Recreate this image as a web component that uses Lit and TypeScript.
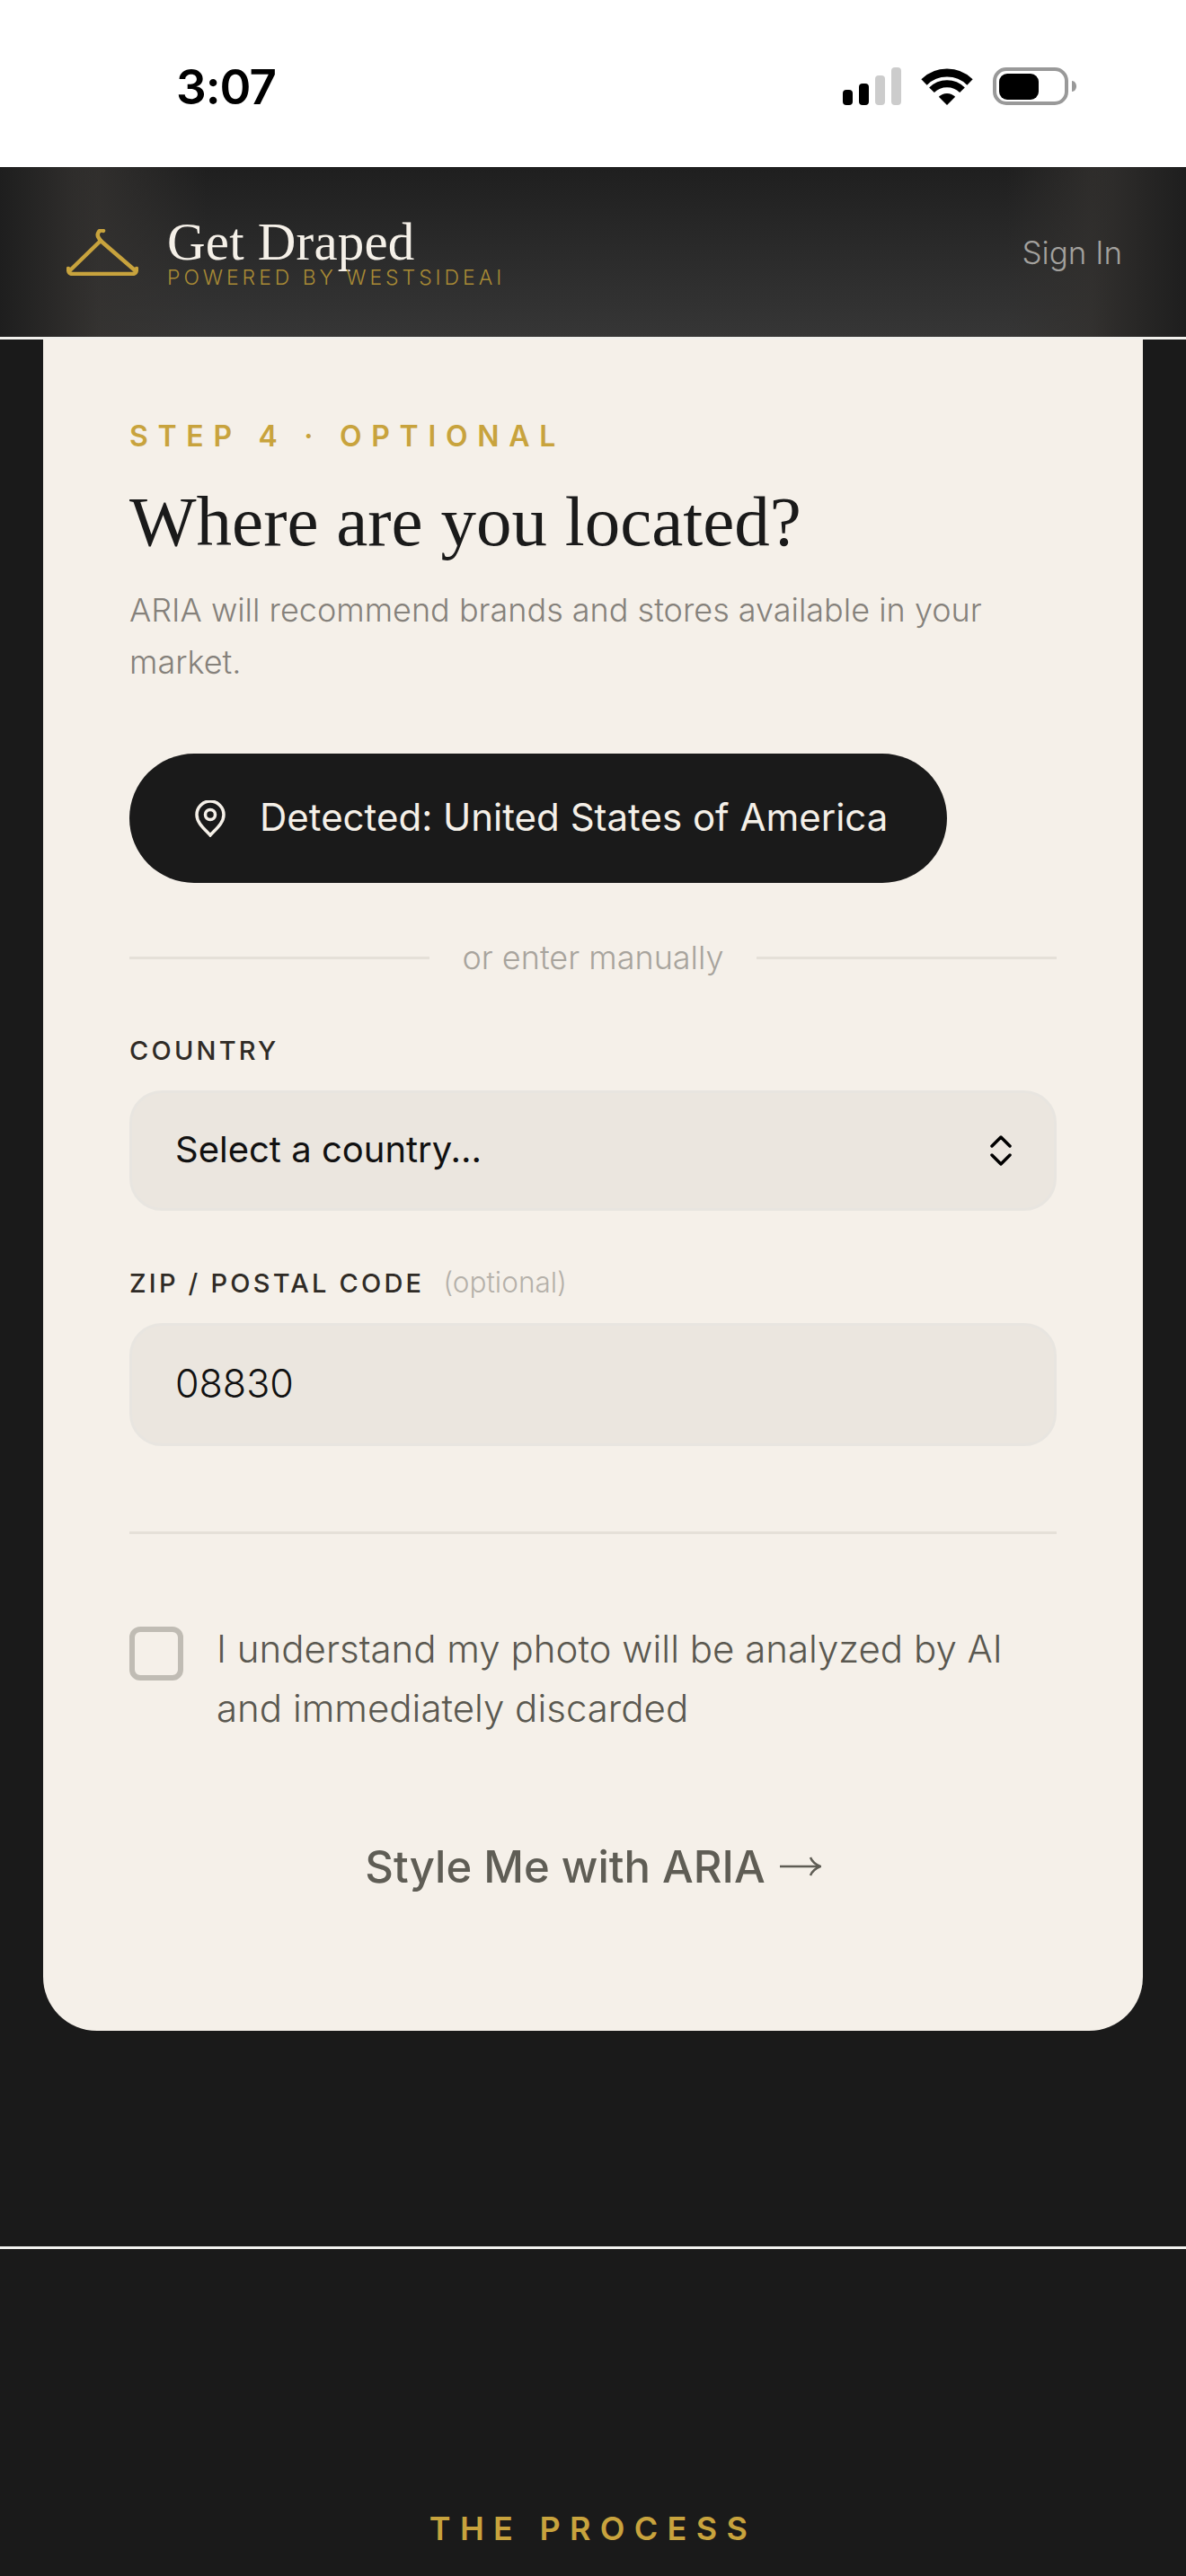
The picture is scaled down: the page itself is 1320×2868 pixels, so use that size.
import { LitElement, html, css } from 'lit';
import { customElement } from 'lit/decorators.js';

@customElement('app-root')
export class AppRoot extends LitElement {
  static styles = css`
    :host {
      display: block;
      width: 1320px;
      height: 2868px;
      overflow: hidden;
      background: #1a1a1a;
      font-family: "Inter", "Noto Sans", sans-serif;
    }
    .status {
      height: 186px;
      background: #fff;
      display: flex;
      align-items: flex-start;
      justify-content: space-between;
      padding: 75px 122px 0 196px;
      box-sizing: border-box;
    }
    .time {
      font-size: 53px;
      line-height: 44px;
      font-weight: 600;
      color: #000;
      letter-spacing: -1px;
    }
    .status-icons {
      display: flex;
      align-items: flex-start;
      gap: 22px;
    }
    .status-icons svg { display: block; }
    .header {
      height: 192px;
      box-sizing: border-box;
      border-bottom: 3px solid #f1f0ec;
      padding: 0 71px 0 74px;
      display: flex;
      align-items: center;
      justify-content: space-between;
      background:
        linear-gradient(90deg, #1e1e1e 0, rgba(30, 30, 30, 0) 110px, rgba(30, 30, 30, 0) 1215px, #1e1e1e 1320px),
        linear-gradient(90deg, #343230 80px, rgba(52, 50, 48, 0) 230px, rgba(50, 48, 46, 0) 1120px, #32302e 1240px),
        linear-gradient(180deg, #1f1f1f 0, #363636 100%);
    }
    .brand {
      display: flex;
      align-items: center;
      gap: 32px;
    }
    .brand svg { display: block; }
    .brand-text {
      display: flex;
      flex-direction: column;
      padding-top: 5px;
    }
    .brand-name {
      font-family: "Liberation Serif", serif;
      font-size: 59px;
      line-height: 52px;
      color: #f5f0e8;
      letter-spacing: 0.2px;
    }
    .brand-sub {
      font-size: 23px;
      line-height: 28px;
      font-weight: 300;
      color: #a88a35;
      letter-spacing: 3.95px;
      white-space: nowrap;
    }
    .sign-in {
      font-size: 35px;
      color: #a3a19e;
      font-weight: 300;
    }
    .card {
      margin: 0 48px;
      padding: 88px 96px 143px;
      background: #f5f0e9;
      border-radius: 0 0 60px 60px;
    }
    .step {
      font-size: 32px;
      line-height: 40px;
      font-weight: 600;
      letter-spacing: 10.7px;
      color: #c8a33d;
      white-space: nowrap;
    }
    h1 {
      margin: 30px 0 0;
      font-family: "Liberation Serif", serif;
      font-weight: 400;
      font-size: 79px;
      line-height: 90px;
      color: #1a1a1a;
      white-space: nowrap;
    }
    .lead {
      margin: 24px 0 0;
      font-size: 36px;
      line-height: 58px;
      font-weight: 300;
      color: #85817b;
    }
    .detect {
      margin-top: 73px;
      width: 910px;
      height: 144px;
      box-sizing: border-box;
      border-radius: 72px;
      background: #1a1a1a;
      color: #f5f0e8;
      padding: 0 0 0 73px;
      display: flex;
      align-items: center;
      gap: 38px;
      font-size: 42px;
      white-space: nowrap;
    }
    .detect span { padding-bottom: 3px; }
    .detect svg { display: block; flex: none; }
    .or {
      margin-top: 61px;
      display: flex;
      align-items: center;
      gap: 36px;
      font-size: 36px;
      line-height: 44px;
      font-weight: 300;
      color: #a8a49d;
      white-space: nowrap;
    }
    .or i {
      flex: 1;
      height: 3px;
      background: #e5e0d8;
    }
    .label {
      font-size: 29px;
      line-height: 36px;
      font-weight: 500;
      letter-spacing: 3.2px;
      color: #2f2b26;
      white-space: nowrap;
    }
    .label span {
      font-size: 31.5px;
      font-weight: 300;
      letter-spacing: 0;
      color: #b5b1aa;
      margin-left: 10px;
    }
    .label-country { margin-top: 64px; }
    .label-zip { margin-top: 62px; }
    .field {
      margin-top: 26px;
      box-sizing: border-box;
      border: 3px solid #e8e5e0;
      border-radius: 36px;
      background: #ebe6df;
      padding: 0 48px;
      display: flex;
      align-items: center;
      justify-content: space-between;
      font-size: 40px;
      color: #111;
    }
    .field span { padding-bottom: 3px; }
    .select { height: 134px; }
    .zip { height: 137px; font-size: 43px; font-weight: 300; }
    .field svg { display: block; margin-right: -1px; }
    .rule {
      margin-top: 95px;
      height: 3px;
      background: #e5e0d8;
    }
    .consent {
      margin-top: 95px;
      display: flex;
      align-items: flex-start;
      gap: 37px;
      font-size: 42px;
      line-height: 66px;
      font-weight: 300;
      color: #5a5850;
    }
    .check {
      flex: none;
      width: 60px;
      height: 60px;
      box-sizing: border-box;
      margin-top: 8px;
      border: 6px solid #c0bcb4;
      border-radius: 12px;
    }
    .cta {
      margin-top: 103px;
      height: 80px;
      display: flex;
      align-items: center;
      justify-content: center;
      gap: 16px;
      font-size: 49px;
      font-weight: 500;
      color: #5f5d55;
      white-space: nowrap;
    }
    .cta svg { display: block; }
    .sep {
      margin-top: 240px;
      height: 3px;
      background: #f2f2f0;
    }
    .process {
      margin: 0;
      padding: 286px 0 0;
      text-align: center;
      font-size: 36px;
      line-height: 50px;
      font-weight: 600;
      letter-spacing: 10.3px;
      color: #c8a33d;
      white-space: nowrap;
    }
  `;

  render() {
    return html`
      <div class="status">
        <span class="time">3:07</span>
        <div class="status-icons">
          <svg width="65" height="42" viewBox="0 0 65 42">
            <rect x="0" y="25" width="11" height="17" rx="4" fill="#000"></rect>
            <rect x="18" y="18" width="11" height="24" rx="4" fill="#000"></rect>
            <rect x="36" y="9" width="11" height="33" rx="4" fill="#ccc"></rect>
            <rect x="54" y="0" width="11" height="42" rx="4" fill="#ccc"></rect>
          </svg>
          <svg width="58" height="42" viewBox="0 0 58 42">
            <path d="M3.5 16.500A36.500 36.500 0 0 1 54.500 16.500" fill="none" stroke="#000" stroke-width="9"></path>
            <path d="M12 25.200A24 24 0 0 1 46 25.200" fill="none" stroke="#000" stroke-width="8"></path>
            <path d="M29 42L19.800 32.800A13 13 0 0 1 38.200 32.800Z" fill="#000"></path>
          </svg>
          <svg width="93" height="42" viewBox="0 0 93 42">
            <rect x="2" y="2" width="80" height="38" rx="13" fill="none" stroke="#999" stroke-width="4"></rect>
            <rect x="7" y="7" width="44" height="29" rx="9" fill="#000"></rect>
            <path d="M88 15C91 15 93 18 93 21C93 24 91 27 88 27Z" fill="#999"></path>
          </svg>
        </div>
      </div>
      <header class="header">
        <div class="brand">
          <svg width="80" height="52" viewBox="0 0 80 52" fill="none" stroke="#c8a33d" stroke-width="4.500" stroke-linecap="round">
            <path d="M41 2C36 0 33 6 36 10L38 13"></path>
            <path d="M38 13L5 45"></path>
            <path d="M38 13L75 45"></path>
            <path d="M2 44C2 48 4 50 7 50H73C76 50 78 48 78 44"></path>
          </svg>
          <div class="brand-text">
            <span class="brand-name">Get Draped</span>
            <span class="brand-sub">POWERED BY WESTSIDEAI</span>
          </div>
        </div>
        <span class="sign-in">Sign In</span>
      </header>
      <main>
        <section class="card">
          <div class="step">STEP 4 · OPTIONAL</div>
          <h1>Where are you located?</h1>
          <p class="lead">ARIA will recommend brands and stores available in your market.</p>
          <div class="detect">
            <svg width="34" height="41" viewBox="0 0 34 41" fill="none" stroke="#f5f0e8" stroke-width="3.500">
              <path d="M17 39C12 33 2 26 2 16A15 15 0 0 1 32 16C32 26 22 33 17 39Z"></path>
              <circle cx="17" cy="16" r="5.500"></circle>
            </svg>
            <span>Detected: United States of America</span>
          </div>
          <div class="or"><i></i><span>or enter manually</span><i></i></div>
          <div class="label label-country">COUNTRY</div>
          <div class="field select">
            <span>Select a country...</span>
            <svg width="24" height="34" viewBox="0 0 24 34" fill="none" stroke="#000" stroke-width="3.500" stroke-linecap="round" stroke-linejoin="round">
              <path d="M2 12L12 2L22 12"></path>
              <path d="M2 22L12 32L22 22"></path>
            </svg>
          </div>
          <div class="label label-zip">ZIP / POSTAL CODE <span>(optional)</span></div>
          <div class="field zip"><span>08830</span></div>
          <div class="rule"></div>
          <div class="consent">
            <span class="check"></span>
            <span>I understand my photo will be analyzed by AI and immediately discarded</span>
          </div>
          <div class="cta">
            <span>Style Me with ARIA</span>
            <svg width="46" height="26" viewBox="0 0 46 26" fill="none" stroke="#5f5d55" stroke-width="2.500">
              <path d="M0 13H44"></path>
              <path d="M34 3C36 8 40 11 45 13C40 15 36 18 34 23"></path>
            </svg>
          </div>
        </section>
        <div class="sep"></div>
        <h2 class="process">THE PROCESS</h2>
      </main>
    `;
  }
}
